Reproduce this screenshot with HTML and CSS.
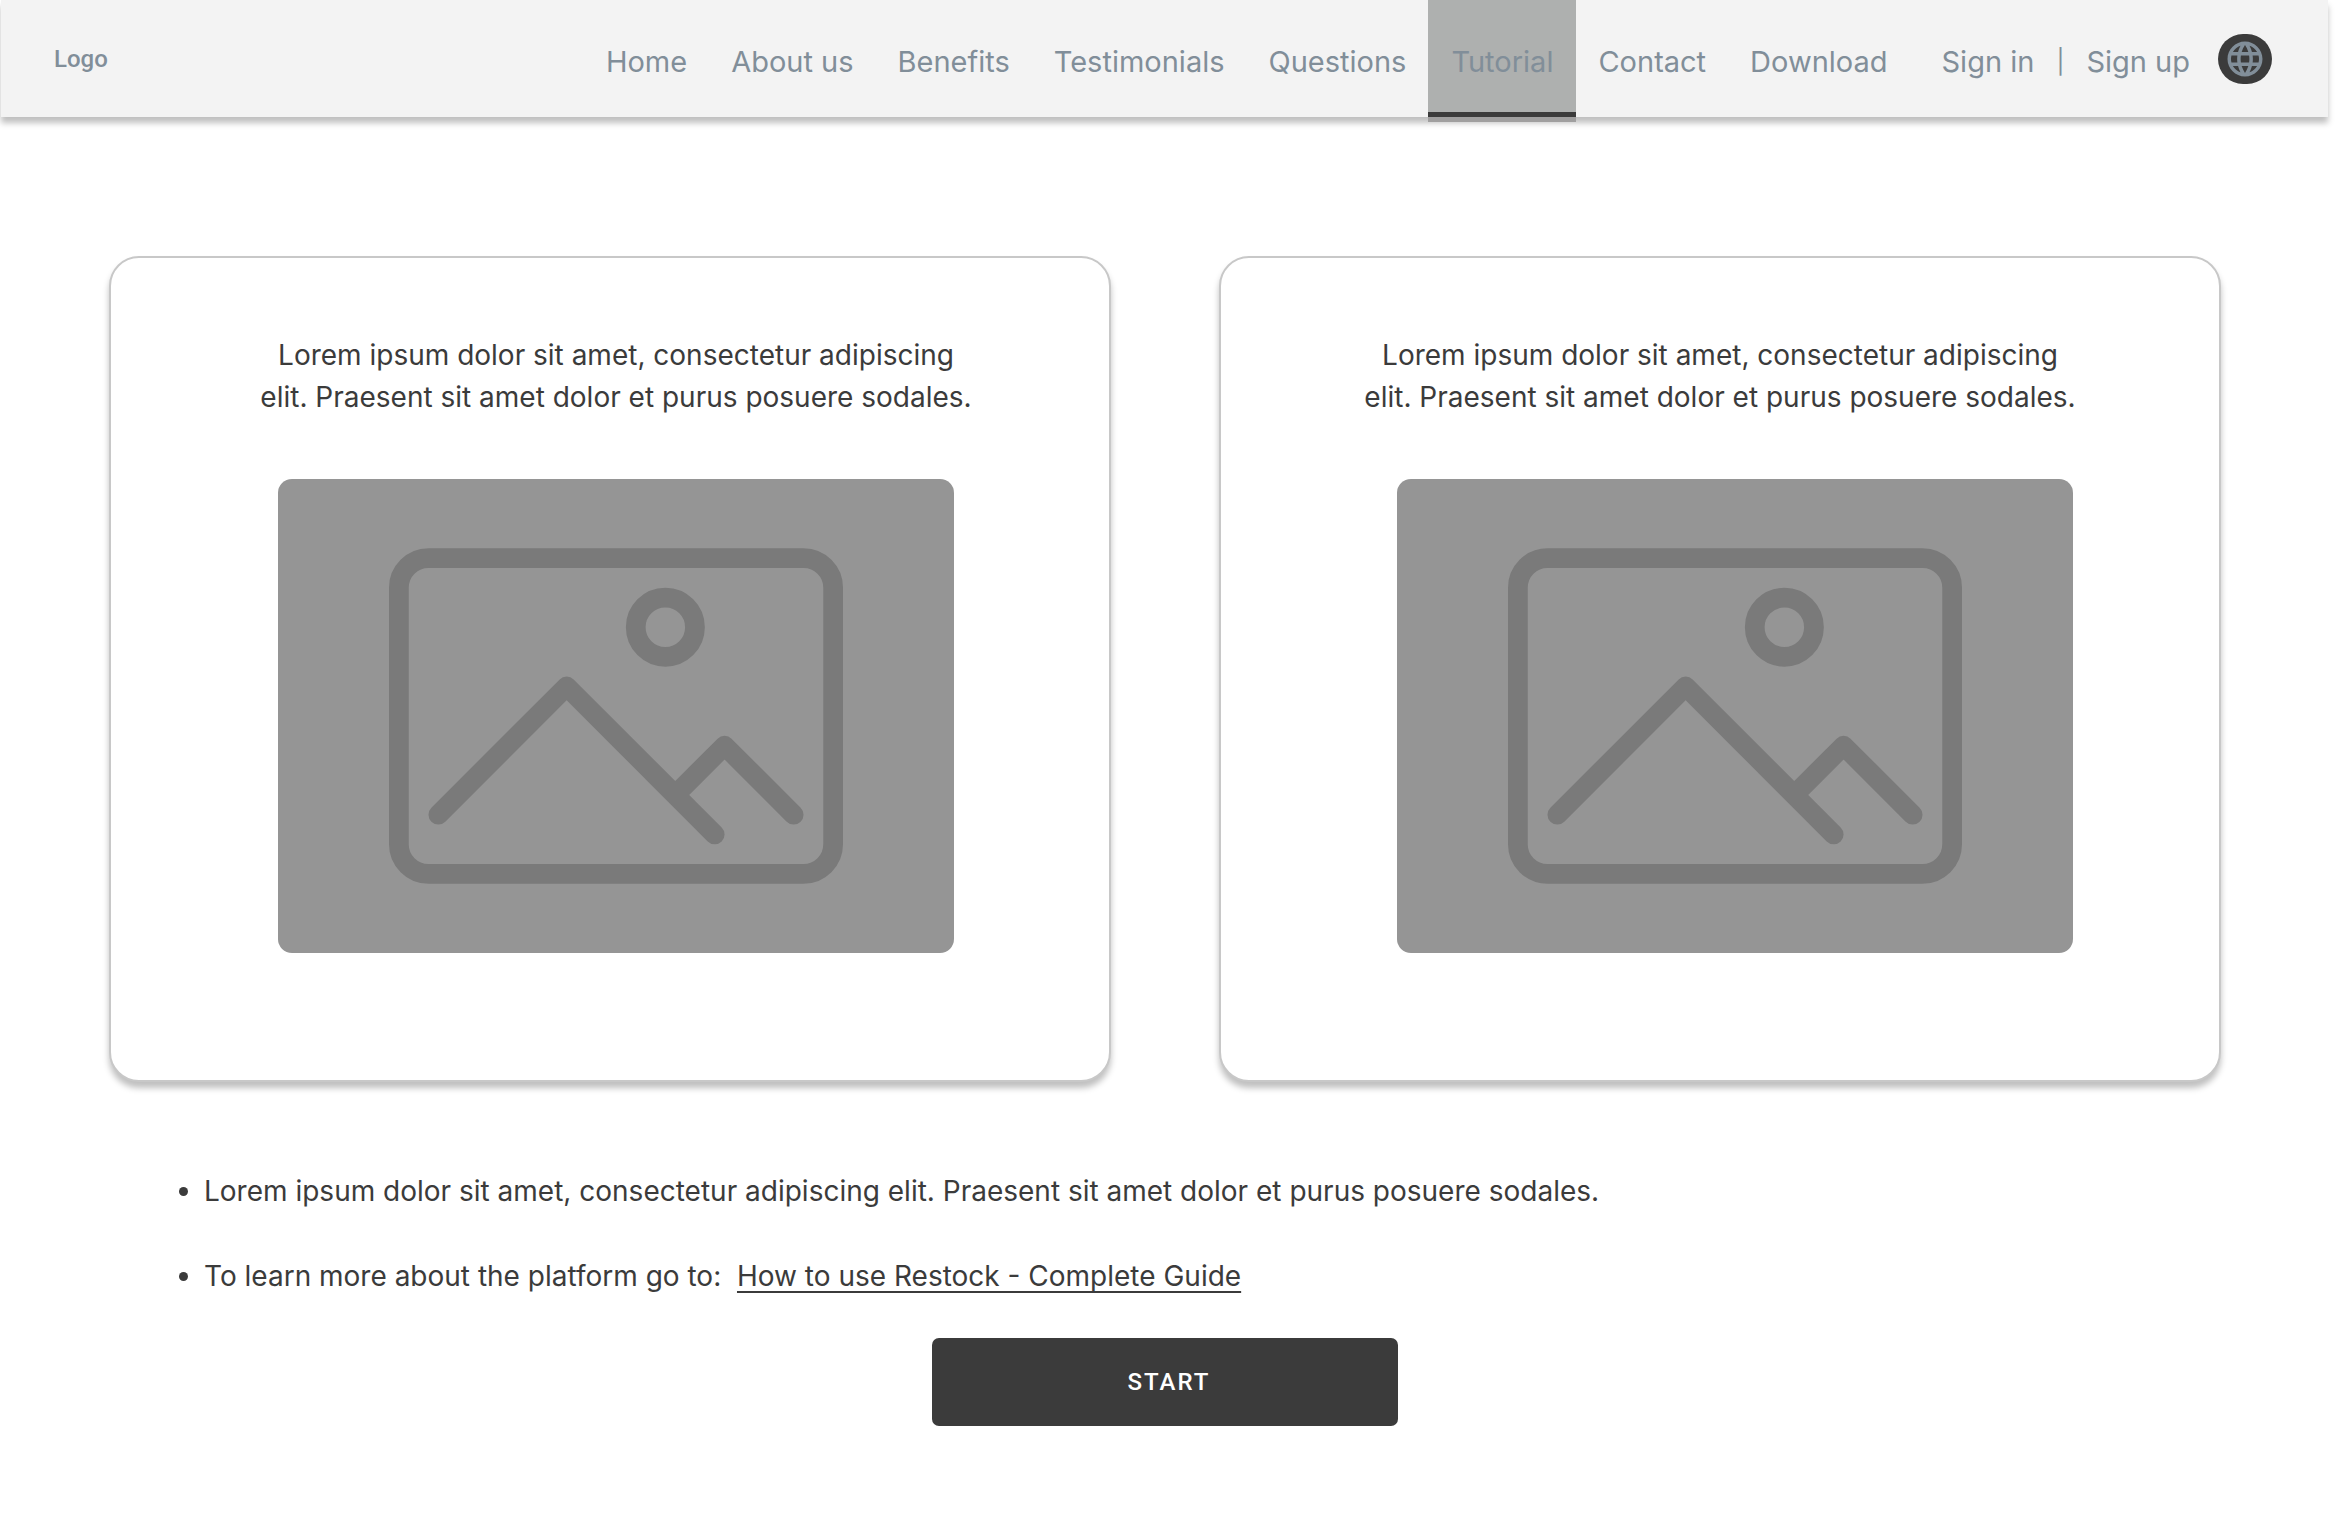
FILE: index.html
```html
<!DOCTYPE html>
<html lang="en">
<head>
<meta charset="utf-8">
<meta name="viewport" content="width=device-width, initial-scale=1">
<title>Restock - Tutorial</title>
<link rel="stylesheet" href="styles.css">
</head>
<body>
<header class="topbar">
  <a class="logo" href="#">Logo</a>
  <nav class="nav" aria-label="Main">
    <a class="nav-link" href="#home">Home</a>
    <a class="nav-link" href="#about">About us</a>
    <a class="nav-link" href="#benefits">Benefits</a>
    <a class="nav-link" href="#testimonials">Testimonials</a>
    <a class="nav-link" href="#questions">Questions</a>
    <a class="nav-link nav-link-current" href="#tutorial" aria-current="page">Tutorial</a>
    <a class="nav-link" href="#contact">Contact</a>
    <a class="nav-link" href="#download">Download</a>
  </nav>
  <div class="account">
    <a class="account-link" href="#signin">Sign in</a>
    <span class="account-divider">|</span>
    <a class="account-link" href="#signup">Sign up</a>
  </div>
  <button class="language" type="button" aria-label="Language">
    <svg class="language-icon" viewBox="0 0 24 24" aria-hidden="true"><path fill="currentColor" d="M11.99 2C6.47 2 2 6.48 2 12s4.47 10 9.99 10C17.52 22 22 17.52 22 12S17.52 2 11.99 2zm6.93 6h-2.95a15.65 15.65 0 0 0-1.38-3.56A8.03 8.03 0 0 1 18.92 8zM12 4.04c.83 1.2 1.48 2.53 1.91 3.96h-3.82c.43-1.43 1.08-2.76 1.91-3.96zM4.26 14C4.1 13.36 4 12.69 4 12s.1-1.36.26-2h3.38c-.08.66-.14 1.32-.14 2s.06 1.34.14 2H4.26zm.82 2h2.95c.32 1.25.78 2.45 1.38 3.56A7.987 7.987 0 0 1 5.08 16zm2.95-8H5.08a7.987 7.987 0 0 1 4.33-3.56A15.65 15.65 0 0 0 8.03 8zM12 19.96c-.83-1.2-1.48-2.53-1.91-3.96h3.82c-.43 1.43-1.08 2.76-1.91 3.96zM14.34 14H9.66c-.09-.66-.16-1.32-.16-2s.07-1.35.16-2h4.68c.09.65.16 1.32.16 2s-.07 1.34-.16 2zm.25 5.56c.6-1.11 1.06-2.31 1.38-3.56h2.95a8.03 8.03 0 0 1-4.33 3.56zM16.36 14c.08-.66.14-1.32.14-2s-.06-1.34-.14-2h3.38c.16.64.26 1.31.26 2s-.1 1.36-.26 2h-3.38z"/></svg>
  </button>
</header>

<main class="page">
  <div class="cards">
    <article class="card card-first">
      <p class="card-text">Lorem ipsum dolor sit amet, consectetur adipiscing elit. Praesent sit amet dolor et purus posuere sodales.</p>
      <div class="picture">
        <svg class="picture-icon" viewBox="0 0 46 34" aria-hidden="true">
          <g fill="none" stroke="currentColor" stroke-width="2" stroke-linecap="round" stroke-linejoin="round">
            <rect x="1" y="1" width="44" height="32" rx="3"/>
            <circle cx="28" cy="8" r="3"/>
            <path d="M5 27 18 14 33 29M29 25 34 20 41 27"/>
          </g>
        </svg>
      </div>
    </article>
    <article class="card card-second">
      <p class="card-text">Lorem ipsum dolor sit amet, consectetur adipiscing elit. Praesent sit amet dolor et purus posuere sodales.</p>
      <div class="picture">
        <svg class="picture-icon" viewBox="0 0 46 34" aria-hidden="true">
          <g fill="none" stroke="currentColor" stroke-width="2" stroke-linecap="round" stroke-linejoin="round">
            <rect x="1" y="1" width="44" height="32" rx="3"/>
            <circle cx="28" cy="8" r="3"/>
            <path d="M5 27 18 14 33 29M29 25 34 20 41 27"/>
          </g>
        </svg>
      </div>
    </article>
  </div>

  <ul class="notes">
    <li>Lorem ipsum dolor sit amet, consectetur adipiscing elit. Praesent sit amet dolor et purus posuere sodales.</li>
    <li>To learn more about the platform go to:&nbsp; <a class="guide" href="#guide">How to use Restock - Complete Guide</a></li>
  </ul>

  <button class="start" type="button">START</button>
</main>
</body>
</html>
```
FILE: styles.css
```css
* {
  box-sizing: border-box;
}

body {
  margin: 0;
  background: #fff;
  color: #3b3b3b;
  font-family: Inter, "Liberation Sans", sans-serif;
  font-size: 28px;
  line-height: 42px;
}

a {
  color: inherit;
  text-decoration: none;
}

.topbar {
  display: flex;
  align-items: center;
  height: 117px;
  margin: 0 8px 0 1px;
  padding: 0 56px 0 53px;
  background: #f3f3f3;
  color: #818e99;
  box-shadow: 0 6px 6px rgba(0, 0, 0, 0.25);
}

.logo {
  margin-right: auto;
  font: 500 24px/28px Roboto, "Liberation Sans", sans-serif;
}

.nav {
  display: flex;
  align-self: stretch;
  font-size: 29px;
}

.nav-link {
  display: flex;
  align-items: center;
  padding: 6px 22px 0;
}

.nav-link-current {
  padding: 11px 23px 0;
  border-bottom: 5px solid #3b3b3b;
  background: #aeb0af;
  box-shadow: 0 5px 0 #a09f9f;
}

.account {
  display: flex;
  align-items: center;
  gap: 22px;
  margin: 0 28px 0 32px;
  padding-top: 6px;
  font-size: 29px;
}

.account-divider {
  font-size: 24px;
}

.language {
  display: flex;
  align-items: center;
  justify-content: center;
  width: 54px;
  height: 50px;
  padding: 0;
  border: 0;
  border-radius: 25px;
  background: #3b3b3b;
  color: #818e99;
}

.language-icon {
  width: 42px;
  height: 42px;
}

.page {
  display: flex;
  flex-direction: column;
  align-items: center;
  padding: 139px 115px 102px 109px;
}

.cards {
  display: grid;
  grid-template-columns: 1fr 1fr;
  gap: 108px;
  width: 100%;
}

.card {
  display: flex;
  flex-direction: column;
  align-items: center;
  gap: 61px;
  padding: 76px 0 127px;
  border: 2px solid #c8c8c8;
  border-radius: 30px;
  background: #fff;
  box-shadow: 0 6px 6px rgba(0, 0, 0, 0.25);
}

.card-first {
  padding-left: 12px;
}

.card-second .picture {
  margin-left: 30px;
}

.card-text {
  max-width: 720px;
  margin: 0;
  text-align: center;
}

.picture {
  display: flex;
  align-items: center;
  justify-content: center;
  width: 676px;
  max-width: 100%;
  height: 474px;
  border-radius: 14px;
  background: #959595;
  color: #7a7a7a;
}

.picture-icon {
  width: 454px;
  height: 336px;
}

.notes {
  display: flex;
  flex-direction: column;
  gap: 43px;
  width: 100%;
  margin: 0;
  padding: 88px 0 0 95px;
}

.guide {
  text-decoration: underline;
  text-decoration-thickness: 2px;
  text-decoration-skip-ink: none;
  text-underline-offset: 5px;
}

.start {
  width: 466px;
  height: 88px;
  margin-top: 41px;
  padding: 0 0 0 8px;
  border: 0;
  border-radius: 7px;
  background: #3b3b3b;
  color: #fff;
  font: 500 24px/36px Roboto, "Liberation Sans", sans-serif;
  letter-spacing: 2px;
}
```
